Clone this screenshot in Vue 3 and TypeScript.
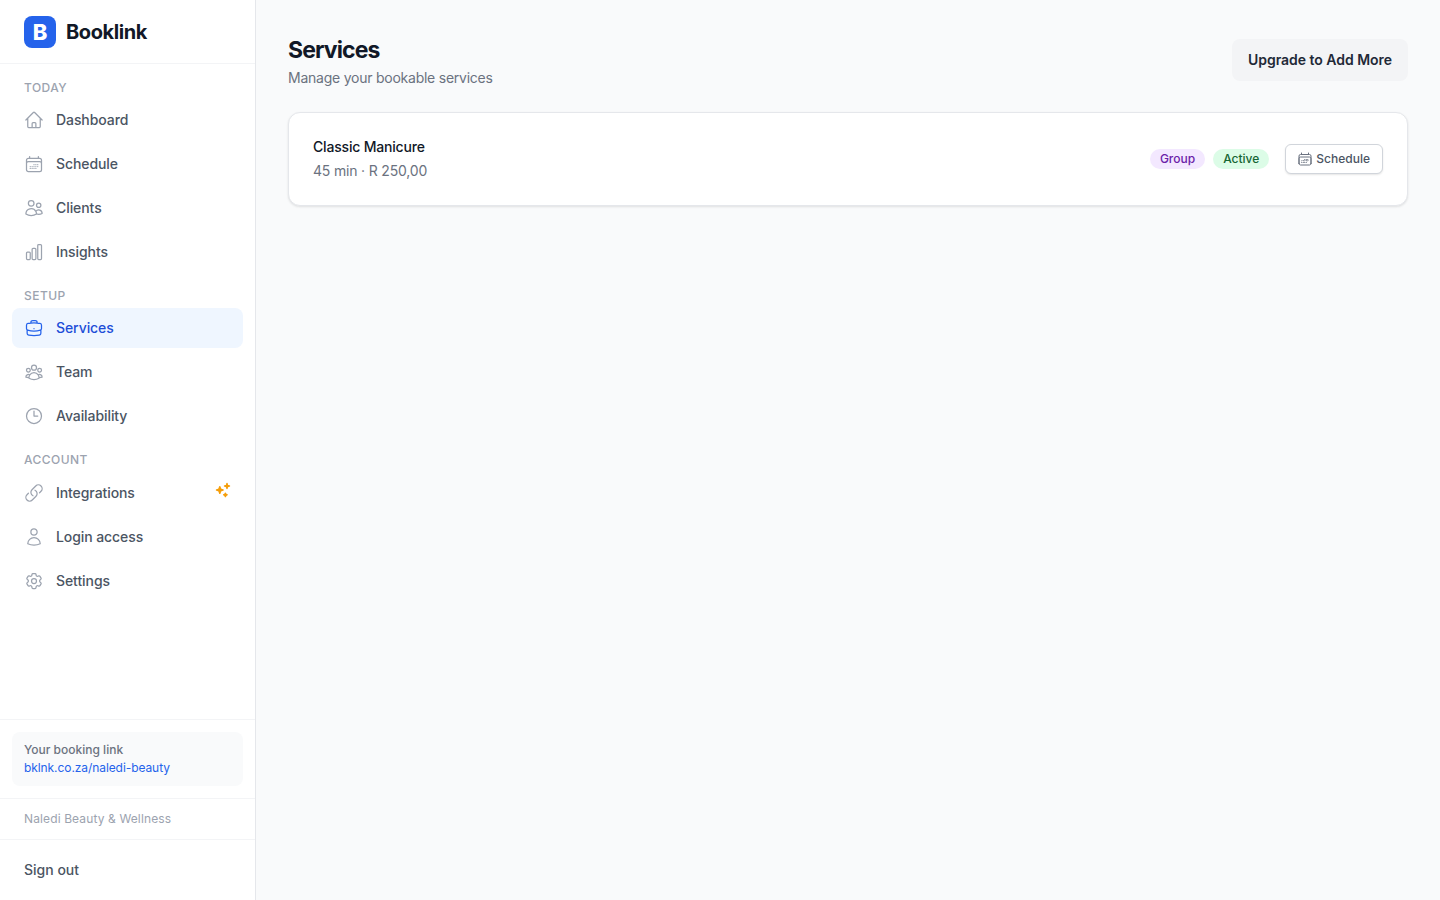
<script setup lang="ts">
interface NavItem {
  label: string
  icon: string[]
  active?: boolean
  sparkle?: boolean
}

const calendarDays = 'M6.75 3v2.25M17.25 3v2.25M3 18.75V7.5a2.25 2.25 0 0 1 2.25-2.25h13.5A2.25 2.25 0 0 1 21 7.5v11.25m-18 0A2.25 2.25 0 0 0 5.25 21h13.5A2.25 2.25 0 0 0 21 18.75m-18 0v-7.5A2.25 2.25 0 0 1 5.25 9h13.5A2.25 2.25 0 0 1 21 11.25v7.5m-9-6h.008v.008H12v-.008ZM12 15h.008v.008H12V15Zm0 2.25h.008v.008H12v-.008ZM9.75 15h.008v.008H9.75V15Zm0 2.25h.008v.008H9.75v-.008ZM7.5 15h.008v.008H7.5V15Zm0 2.25h.008v.008H7.5v-.008Zm6.75-4.5h.008v.008h-.008v-.008Zm0 2.25h.008v.008h-.008V15Zm0 2.25h.008v.008h-.008v-.008Zm2.25-4.5h.008v.008H16.5v-.008Zm0 2.25h.008v.008H16.5V15Z'

const sections: { title: string; items: NavItem[] }[] = [
  {
    title: 'Today',
    items: [
      { label: 'Dashboard', icon: ['m2.25 12 8.954-8.955c.44-.439 1.152-.439 1.591 0L21.75 12M4.5 9.75v10.125c0 .621.504 1.125 1.125 1.125H9.75v-4.875c0-.621.504-1.125 1.125-1.125h2.25c.621 0 1.125.504 1.125 1.125V21h4.125c.621 0 1.125-.504 1.125-1.125V9.75M8.25 21h8.25'] },
      { label: 'Schedule', icon: [calendarDays] },
      { label: 'Clients', icon: ['M15 19.128a9.38 9.38 0 0 0 2.625.372 9.337 9.337 0 0 0 4.121-.952 4.125 4.125 0 0 0-7.533-2.493M15 19.128v-.003c0-1.113-.285-2.16-.786-3.07M15 19.128v.106A12.318 12.318 0 0 1 8.624 21c-2.331 0-4.512-.645-6.374-1.766l-.001-.109a6.375 6.375 0 0 1 11.964-3.07M12 6.375a3.375 3.375 0 1 1-6.75 0 3.375 3.375 0 0 1 6.75 0Zm8.25 2.25a2.625 2.625 0 1 1-5.25 0 2.625 2.625 0 0 1 5.25 0Z'] },
      { label: 'Insights', icon: ['M3 13.125C3 12.504 3.504 12 4.125 12h2.25c.621 0 1.125.504 1.125 1.125v6.75C7.5 20.496 6.996 21 6.375 21h-2.25A1.125 1.125 0 0 1 3 19.875v-6.75ZM9.75 8.625c0-.621.504-1.125 1.125-1.125h2.25c.621 0 1.125.504 1.125 1.125v11.25c0 .621-.504 1.125-1.125 1.125h-2.25a1.125 1.125 0 0 1-1.125-1.125V8.625ZM16.5 4.125c0-.621.504-1.125 1.125-1.125h2.25C20.496 3 21 3.504 21 4.125v15.75c0 .621-.504 1.125-1.125 1.125h-2.25a1.125 1.125 0 0 1-1.125-1.125V4.125Z'] },
    ],
  },
  {
    title: 'Setup',
    items: [
      { label: 'Services', active: true, icon: ['M20.25 14.15v4.25c0 1.094-.787 2.036-1.872 2.18-2.087.277-4.216.42-6.378.42s-4.291-.143-6.378-.42c-1.085-.144-1.872-1.086-1.872-2.18v-4.25m16.5 0a2.18 2.18 0 0 0 .75-1.661V8.706c0-1.081-.768-2.015-1.837-2.175a48.114 48.114 0 0 0-3.413-.387m4.5 8.006c-.194.165-.42.295-.673.38A23.978 23.978 0 0 1 12 15.75c-2.648 0-5.195-.429-7.577-1.22a2.016 2.016 0 0 1-.673-.38m0 0A2.18 2.18 0 0 1 3 12.489V8.706c0-1.081.768-2.015 1.837-2.175a48.111 48.111 0 0 1 3.413-.387m7.5 0V5.25A2.25 2.25 0 0 0 13.5 3h-3a2.25 2.25 0 0 0-2.25 2.25v.894m7.5 0a48.667 48.667 0 0 0-7.5 0M12 12.75h.008v.008H12v-.008Z'] },
      { label: 'Team', icon: ['M18 18.72a9.094 9.094 0 0 0 3.741-.479 3 3 0 0 0-4.682-2.72m.94 3.198.001.031c0 .225-.012.447-.037.666A11.944 11.944 0 0 1 12 21c-2.17 0-4.207-.576-5.963-1.584A6.062 6.062 0 0 1 6 18.719m12 0a5.971 5.971 0 0 0-.941-3.197m0 0A5.995 5.995 0 0 0 12 12.75a5.995 5.995 0 0 0-5.058 2.772m0 0a3 3 0 0 0-4.681 2.72 8.986 8.986 0 0 0 3.74.477m.94-3.197a5.971 5.971 0 0 0-.94 3.197M15 6.75a3 3 0 1 1-6 0 3 3 0 0 1 6 0Zm6 3a2.25 2.25 0 1 1-4.5 0 2.25 2.25 0 0 1 4.5 0Zm-13.5 0a2.25 2.25 0 1 1-4.5 0 2.25 2.25 0 0 1 4.5 0Z'] },
      { label: 'Availability', icon: ['M12 6v6h4.5m4.5 0a9 9 0 1 1-18 0 9 9 0 0 1 18 0Z'] },
    ],
  },
  {
    title: 'Account',
    items: [
      { label: 'Integrations', sparkle: true, icon: ['M13.19 8.688a4.5 4.5 0 0 1 1.242 7.244l-4.5 4.5a4.5 4.5 0 0 1-6.364-6.364l1.757-1.757m13.35-.622 1.757-1.757a4.5 4.5 0 0 0-6.364-6.364l-4.5 4.5a4.5 4.5 0 0 0 1.242 7.244'] },
      { label: 'Login access', icon: ['M15.75 6a3.75 3.75 0 1 1-7.5 0 3.75 3.75 0 0 1 7.5 0ZM4.501 20.118a7.5 7.5 0 0 1 14.998 0A17.933 17.933 0 0 1 12 21.75c-2.676 0-5.216-.584-7.499-1.632Z'] },
      { label: 'Settings', icon: ['M9.594 3.94c.09-.542.56-.94 1.11-.94h2.593c.55 0 1.02.398 1.11.94l.213 1.281c.063.374.313.686.645.87.074.04.147.083.22.127.325.196.72.257 1.075.124l1.217-.456a1.125 1.125 0 0 1 1.37.49l1.296 2.247a1.125 1.125 0 0 1-.26 1.431l-1.003.827c-.293.241-.438.613-.43.992a7.723 7.723 0 0 1 0 .255c-.008.378.137.75.43.991l1.004.827c.424.35.534.955.26 1.43l-1.298 2.247a1.125 1.125 0 0 1-1.369.491l-1.217-.456c-.355-.133-.75-.072-1.076.124a6.47 6.47 0 0 1-.22.128c-.331.183-.581.495-.644.869l-.213 1.281c-.09.543-.56.94-1.11.94h-2.594c-.55 0-1.019-.398-1.11-.94l-.213-1.281c-.062-.374-.312-.686-.644-.87a6.52 6.52 0 0 1-.22-.127c-.325-.196-.72-.257-1.076-.124l-1.217.456a1.125 1.125 0 0 1-1.369-.49l-1.297-2.247a1.125 1.125 0 0 1 .26-1.431l1.004-.827c.292-.24.437-.613.43-.991a6.932 6.932 0 0 1 0-.255c.007-.38-.138-.751-.43-.992l-1.004-.827a1.125 1.125 0 0 1-.26-1.43l1.297-2.247a1.125 1.125 0 0 1 1.37-.491l1.216.456c.356.133.751.072 1.076-.124.072-.044.146-.086.22-.128.332-.183.582-.495.644-.869l.214-1.28Z', 'M15 12a3 3 0 1 1-6 0 3 3 0 0 1 6 0Z'] },
    ],
  },
]
</script>

<template>
  <div class="layout">
    <aside class="sidebar">
      <div class="brand">
        <div class="brand-mark">B</div>
        <span class="brand-name">Booklink</span>
      </div>

      <nav class="nav">
        <div v-for="section in sections" :key="section.title" class="nav-section">
          <div class="nav-title">{{ section.title }}</div>
          <a
            v-for="item in section.items"
            :key="item.label"
            href="#"
            class="nav-item"
            :class="{ active: item.active, 'has-sparkle': item.sparkle }"
          >
            <svg class="nav-icon" viewBox="0 0 24 24" fill="none" stroke="currentColor" stroke-width="1.5"
              stroke-linecap="round" stroke-linejoin="round">
              <path v-for="d in item.icon" :key="d" :d="d" />
            </svg>
            <span>{{ item.label }}</span>
            <svg v-if="item.sparkle" class="sparkle" viewBox="0 0 20 20" fill="currentColor">
              <path d="M15.98 1.804a1 1 0 0 0-1.96 0l-.24 1.192a1 1 0 0 1-.784.785l-1.192.238a1 1 0 0 0 0 1.962l1.192.238a1 1 0 0 1 .785.785l.238 1.192a1 1 0 0 0 1.962 0l.238-1.192a1 1 0 0 1 .785-.785l1.192-.238a1 1 0 0 0 0-1.962l-1.192-.238a1 1 0 0 1-.785-.785l-.238-1.192ZM6.949 5.684a1 1 0 0 0-1.898 0l-.683 2.051a1 1 0 0 1-.633.633l-2.051.683a1 1 0 0 0 0 1.898l2.051.684a1 1 0 0 1 .633.632l.683 2.051a1 1 0 0 0 1.898 0l.683-2.051a1 1 0 0 1 .633-.633l2.051-.683a1 1 0 0 0 0-1.898l-2.051-.683a1 1 0 0 1-.633-.633L6.95 5.684ZM13.949 13.684a1 1 0 0 0-1.898 0l-.184.551a1 1 0 0 1-.632.633l-.551.183a1 1 0 0 0 0 1.898l.551.183a1 1 0 0 1 .633.633l.183.551a1 1 0 0 0 1.898 0l.184-.551a1 1 0 0 1 .632-.633l.551-.183a1 1 0 0 0 0-1.898l-.551-.184a1 1 0 0 1-.633-.632l-.183-.551Z" />
            </svg>
          </a>
        </div>
      </nav>

      <div class="link-wrap">
        <div class="link-box">
          <div class="link-label">Your booking link</div>
          <a href="#" class="link-url">bklnk.co.za/naledi-beauty</a>
        </div>
      </div>
      <div class="business">Naledi Beauty &amp; Wellness</div>
      <div class="signout-wrap">
        <button class="signout">Sign out</button>
      </div>
    </aside>

    <main class="main">
      <header class="page-header">
        <div>
          <h1 class="page-title">Services</h1>
          <p class="page-sub">Manage your bookable services</p>
        </div>
        <button class="upgrade">Upgrade to Add More</button>
      </header>

      <section class="card">
        <div>
          <div class="service-name">Classic Manicure</div>
          <div class="service-meta">45 min · R 250,00</div>
        </div>
        <div class="card-actions">
          <div class="badges">
            <span class="badge badge-group">Group</span>
            <span class="badge badge-active">Active</span>
          </div>
          <button class="schedule-btn">
            <svg class="schedule-icon" viewBox="0 0 24 24" fill="none" stroke="currentColor" stroke-width="1.5"
              stroke-linecap="round" stroke-linejoin="round">
              <path :d="calendarDays" />
            </svg>
            Schedule
          </button>
        </div>
      </section>
    </main>
  </div>
</template>

<style>
body {
  background: #f9fafb;
}
</style>

<style scoped>
.layout {
  display: flex;
  min-height: 100vh;
  font-family: Inter, "Liberation Sans", sans-serif;
  font-size: 14px;
  line-height: 20px;
  color: #111827;
  background: #f9fafb;
}

.sidebar {
  width: 256px;
  height: 100vh;
  flex-shrink: 0;
  box-sizing: border-box;
  display: flex;
  flex-direction: column;
  background: #fff;
  border-right: 1px solid #e5e7eb;
}

.brand {
  height: 64px;
  box-sizing: border-box;
  flex-shrink: 0;
  display: flex;
  align-items: center;
  gap: 10px;
  padding: 0 24px;
  border-bottom: 1px solid #f3f4f6;
}

.brand-mark {
  width: 32px;
  height: 32px;
  border-radius: 8px;
  background: #2563eb;
  color: #fff;
  display: flex;
  align-items: center;
  justify-content: center;
  font-size: 22px;
  font-weight: 800;
}

.brand-name {
  font-size: 20px;
  line-height: 28px;
  font-weight: 700;
  letter-spacing: -0.4px;
  color: #111827;
}

.nav {
  flex: 1;
  display: flex;
  flex-direction: column;
  gap: 16px;
  padding: 16px 12px 0;
}

.nav-section {
  display: flex;
  flex-direction: column;
  gap: 4px;
}

.nav-title {
  padding: 0 12px;
  font-size: 12px;
  line-height: 16px;
  font-weight: 500;
  letter-spacing: 0.45px;
  text-transform: uppercase;
  color: #9ca3af;
}

.nav-item {
  position: relative;
  display: flex;
  align-items: center;
  gap: 12px;
  padding: 10px 12px;
  border-radius: 8px;
  font-weight: 500;
  letter-spacing: -0.08px;
  color: #4b5563;
  text-decoration: none;
}

.nav-item.has-sparkle {
  padding-top: 11px;
}

.nav-item.active {
  background: #eff6ff;
  color: #1d4ed8;
}

.nav-icon {
  width: 20px;
  height: 20px;
  flex-shrink: 0;
  color: #9ca3af;
}

.nav-item.active .nav-icon {
  color: #2563eb;
}

.sparkle {
  position: absolute;
  top: 10px;
  right: 12px;
  width: 16px;
  height: 16px;
  color: #f59e0b;
}

.link-wrap {
  padding: 12px;
  border-top: 1px solid #f3f4f6;
}

.link-box {
  padding: 9px 12px 9px;
  border-radius: 8px;
  background: #f9fafb;
  font-size: 12px;
  line-height: 18px;
}

.link-label {
  font-weight: 500;
  color: #6b7280;
}

.link-url {
  display: block;
  letter-spacing: -0.08px;
  color: #2563eb;
  text-decoration: none;
}

.business {
  padding: 12px 24px;
  border-top: 1px solid #f3f4f6;
  font-size: 12px;
  line-height: 16px;
  letter-spacing: 0.12px;
  color: #9ca3af;
}

.signout-wrap {
  padding: 10px 12px;
  border-top: 1px solid #f3f4f6;
}

.signout {
  width: 100%;
  padding: 10px 12px;
  border: none;
  background: none;
  font: inherit;
  font-weight: 500;
  text-align: left;
  color: #4b5563;
}

.main {
  flex: 1;
  min-width: 0;
  padding: 32px;
}

.page-header {
  display: flex;
  align-items: center;
  justify-content: space-between;
  margin-bottom: 24px;
}

.page-title {
  margin: 0;
  padding-top: 2px;
  font-size: 23px;
  line-height: 32px;
  font-weight: 700;
  letter-spacing: -0.9px;
  color: #111827;
}

.page-sub {
  margin: 2px 0 0;
  letter-spacing: -0.24px;
  color: #6b7280;
}

.upgrade {
  height: 42px;
  padding: 0 16px;
  border: none;
  border-radius: 8px;
  background: #f3f4f6;
  font: inherit;
  font-weight: 600;
  letter-spacing: -0.03px;
  color: #1f2937;
}

.card {
  display: flex;
  align-items: center;
  justify-content: space-between;
  padding: 24px;
  border: 1px solid #e5e7eb;
  border-radius: 12px;
  background: #fff;
  box-shadow: 0 1px 2px rgba(0, 0, 0, 0.05), 0 1px 3px rgba(0, 0, 0, 0.06);
}

.service-name {
  font-weight: 500;
  letter-spacing: -0.19px;
  color: #111827;
}

.service-meta {
  margin-top: 4px;
  letter-spacing: -0.18px;
  color: #6b7280;
}

.card-actions {
  display: flex;
  align-items: center;
  gap: 16px;
}

.badges {
  display: flex;
  gap: 8px;
}

.badge {
  padding: 2px 10px;
  border-radius: 9999px;
  font-size: 12px;
  line-height: 16px;
  font-weight: 500;
}

.badge-group {
  background: #f3e8ff;
  color: #6b21a8;
}

.badge-active {
  background: #dcfce7;
  color: #166534;
}

.schedule-btn {
  display: flex;
  align-items: center;
  gap: 3px;
  height: 30px;
  padding: 0 12px 0 11px;
  border: 1px solid #d1d5db;
  border-radius: 6px;
  background: #fff;
  box-shadow: 0 1px 2px rgba(0, 0, 0, 0.1);
  font: inherit;
  font-size: 12px;
  line-height: 16px;
  font-weight: 500;
  color: #4b5563;
}

.schedule-icon {
  width: 16px;
  height: 16px;
  color: #6b7280;
}
</style>
